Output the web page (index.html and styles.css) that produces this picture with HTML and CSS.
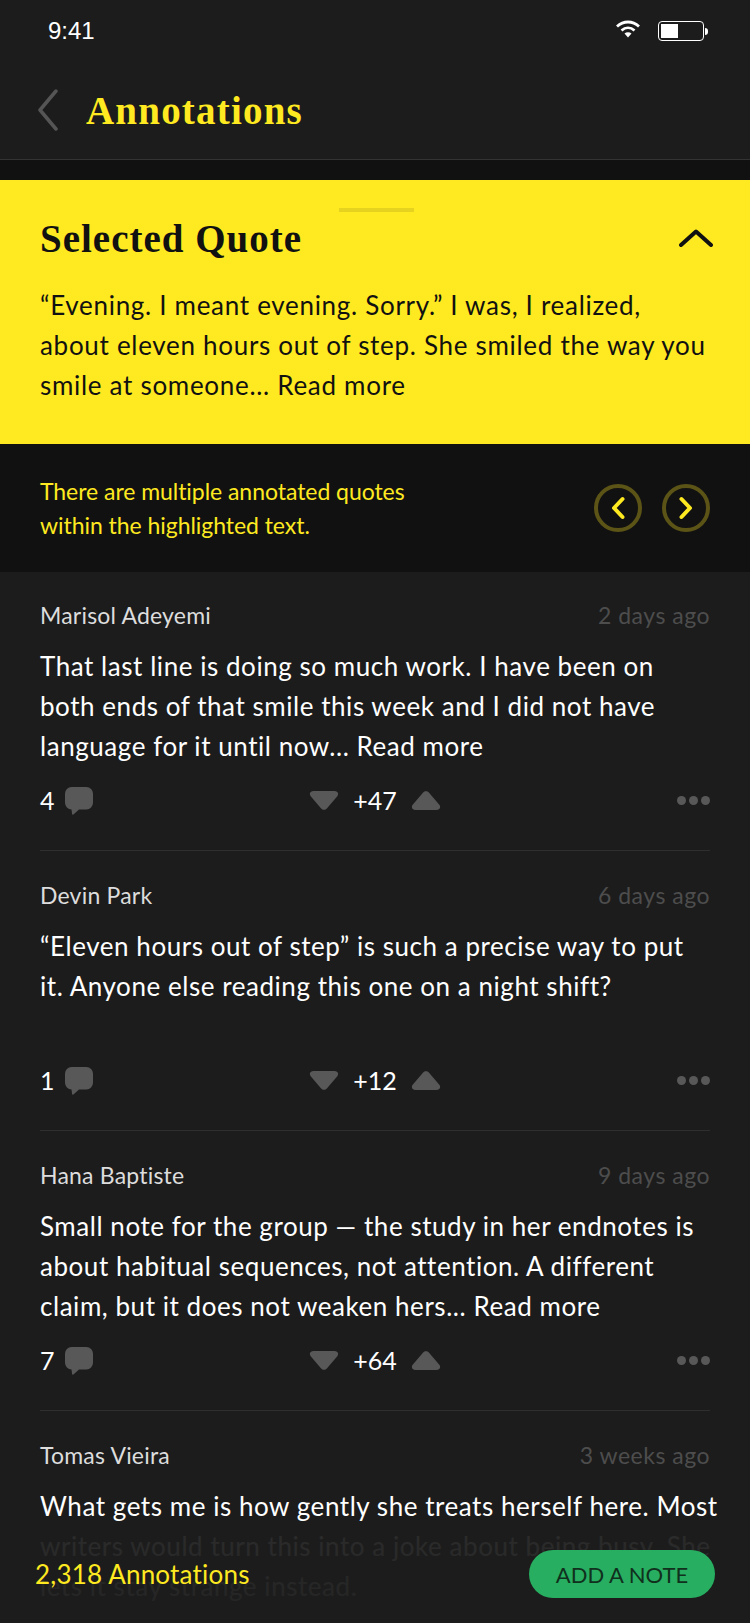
FILE: index.html
```html
<!DOCTYPE html>
<html lang="en">

<head>
    <meta charset="UTF-8">
    <meta name="viewport" content="width=device-width, initial-scale=1.0">
    <title>Annotations</title>
    <link rel="stylesheet" href="styles.css">
</head>

<body>
    <div class="app">
        <div class="top">
            <div class="status-bar">
                <span class="clock">9:41</span>
                <div class="status-icons">
                    <svg class="wifi" width="26" height="20" viewBox="0 0 26 20">
                        <path d="M2 7.5C8.500 1.500 17.500 1.500 24 7.500" fill="none" stroke="#fff" stroke-width="2.800"/>
                        <path d="M6.500 11.500C10.500 8 15.500 8 19.500 11.500" fill="none" stroke="#fff" stroke-width="2.800"/>
                        <path d="M9.500 14.500C11.500 12.800 14.500 12.800 16.500 14.500L13 18.500Z" fill="#fff"/>
                    </svg>
                    <div class="battery">
                        <div class="battery-level"></div>
                    </div>
                    <div class="battery-cap"></div>
                </div>
            </div>
            <div class="nav">
                <svg class="back" width="22" height="42" viewBox="0 0 22 42">
                    <path d="M19 2L3 21L19 40" fill="none" stroke="#555" stroke-width="3.500" stroke-linecap="round" stroke-linejoin="round"/>
                </svg>
                <h1>Annotations</h1>
            </div>
        </div>

        <div class="strip"></div>

        <div class="quote">
            <div class="handle"></div>
            <div class="quote-head">
                <h2>Selected Quote</h2>
                <svg width="34" height="18" viewBox="0 0 34 18">
                    <path d="M2 16L17 2.500L32 16" fill="none" stroke="#111" stroke-width="4" stroke-linecap="round" stroke-linejoin="round"/>
                </svg>
            </div>
            <p>“Evening. I meant evening. Sorry.” I was, I realized,<br>about eleven hours out of step. She smiled the way you<br>smile at someone... Read more</p>
        </div>

        <div class="notice">
            <p>There are multiple annotated quotes<br>within the highlighted text.</p>
            <div class="pager">
                <button class="pager-btn">
                    <svg width="14" height="24" viewBox="0 0 14 24">
                        <path d="M11.500 3L3 12L11.500 21" fill="none" stroke="#ffe920" stroke-width="4" stroke-linecap="round" stroke-linejoin="round"/>
                    </svg>
                </button>
                <button class="pager-btn">
                    <svg width="14" height="24" viewBox="0 0 14 24">
                        <path d="M2.500 3L11 12L2.500 21" fill="none" stroke="#ffe920" stroke-width="4" stroke-linecap="round" stroke-linejoin="round"/>
                    </svg>
                </button>
            </div>
        </div>

        <div class="comments">
            <div class="comment">
                <div class="comment-head">
                    <span class="author">Marisol Adeyemi</span>
                    <span class="when">2 days ago</span>
                </div>
                <p class="comment-body">That last line is doing so much work. I have been on<br>both ends of that smile this week and I did not have<br>language for it until now... Read more</p>
                <div class="actions">
                    <div class="replies">
                        <span>4</span>
                        <svg class="bubble" width="28" height="28" viewBox="0 0 30 30"><path d="M7 0H23A7 7 0 0 1 30 7V17A7 7 0 0 1 23 24H15L9 29.500C8 30 7.500 29.500 7.500 28.500L7 24A7 7 0 0 1 0 17V7A7 7 0 0 1 7 0Z" fill="#585858"/></svg>
                    </div>
                    <div class="votes">
                        <svg width="30" height="19" viewBox="0 0 30 20"><path d="M4 0H26C29.500 0 31 3 29 5.500L18 18.500C16.500 20.300 13.500 20.300 12 18.500L1 5.500C-1 3 .5 0 4 0Z" fill="#585858"/></svg>
                        <span class="score">+47</span>
                        <svg width="30" height="19" viewBox="0 0 30 20"><path d="M4 20H26C29.500 20 31 17 29 14.500L18 1.500C16.500 -.3 13.500 -.3 12 1.500L1 14.500C-1 17 .5 20 4 20Z" fill="#585858"/></svg>
                    </div>
                    <div class="more"><i></i><i></i><i></i></div>
                </div>
            </div>

            <div class="comment">
                <div class="comment-head">
                    <span class="author">Devin Park</span>
                    <span class="when">6 days ago</span>
                </div>
                <p class="comment-body">“Eleven hours out of step” is such a precise way to put<br>it. Anyone else reading this one on a night shift?</p>
                <div class="actions">
                    <div class="replies">
                        <span>1</span>
                        <svg class="bubble" width="28" height="28" viewBox="0 0 30 30"><path d="M7 0H23A7 7 0 0 1 30 7V17A7 7 0 0 1 23 24H15L9 29.500C8 30 7.500 29.500 7.500 28.500L7 24A7 7 0 0 1 0 17V7A7 7 0 0 1 7 0Z" fill="#585858"/></svg>
                    </div>
                    <div class="votes">
                        <svg width="30" height="19" viewBox="0 0 30 20"><path d="M4 0H26C29.500 0 31 3 29 5.500L18 18.500C16.500 20.300 13.500 20.300 12 18.500L1 5.500C-1 3 .5 0 4 0Z" fill="#585858"/></svg>
                        <span class="score">+12</span>
                        <svg width="30" height="19" viewBox="0 0 30 20"><path d="M4 20H26C29.500 20 31 17 29 14.500L18 1.500C16.500 -.3 13.500 -.3 12 1.500L1 14.500C-1 17 .5 20 4 20Z" fill="#585858"/></svg>
                    </div>
                    <div class="more"><i></i><i></i><i></i></div>
                </div>
            </div>

            <div class="comment">
                <div class="comment-head">
                    <span class="author">Hana Baptiste</span>
                    <span class="when">9 days ago</span>
                </div>
                <p class="comment-body">Small note for the group — the study in her endnotes is<br>about habitual sequences, not attention. A different<br>claim, but it does not weaken hers... Read more</p>
                <div class="actions">
                    <div class="replies">
                        <span>7</span>
                        <svg class="bubble" width="28" height="28" viewBox="0 0 30 30"><path d="M7 0H23A7 7 0 0 1 30 7V17A7 7 0 0 1 23 24H15L9 29.500C8 30 7.500 29.500 7.500 28.500L7 24A7 7 0 0 1 0 17V7A7 7 0 0 1 7 0Z" fill="#585858"/></svg>
                    </div>
                    <div class="votes">
                        <svg width="30" height="19" viewBox="0 0 30 20"><path d="M4 0H26C29.500 0 31 3 29 5.500L18 18.500C16.500 20.300 13.500 20.300 12 18.500L1 5.500C-1 3 .5 0 4 0Z" fill="#585858"/></svg>
                        <span class="score">+64</span>
                        <svg width="30" height="19" viewBox="0 0 30 20"><path d="M4 20H26C29.500 20 31 17 29 14.500L18 1.500C16.500 -.3 13.500 -.3 12 1.500L1 14.500C-1 17 .5 20 4 20Z" fill="#585858"/></svg>
                    </div>
                    <div class="more"><i></i><i></i><i></i></div>
                </div>
            </div>

            <div class="comment">
                <div class="comment-head">
                    <span class="author">Tomas Vieira</span>
                    <span class="when">3 weeks ago</span>
                </div>
                <p class="comment-body">What gets me is how gently she treats herself here. Most<br>writers would turn this into a joke about being busy. She<br>lets it stay strange instead.</p>
            </div>
        </div>

        <div class="footer">
            <span class="total">2,318 Annotations</span>
            <button class="add-note">ADD A NOTE</button>
        </div>
    </div>
</body>

</html>
```

FILE: styles.css
```css
* {
    box-sizing: border-box;
}

body {
    margin: 0;
    background-color: #1c1c1c;
    font-family: "Lato", sans-serif;
    color: #fff;
}

p,
h1,
h2 {
    margin: 0;
}

.app {
    width: 750px;
    height: 1623px;
    position: relative;
    overflow: hidden;
    background-color: #1c1c1c;
}

/* Status bar and title */
.top {
    height: 160px;
    border-bottom: 1px solid #333;
}

.status-bar {
    height: 62px;
    padding: 0 42px 0 48px;
    display: flex;
    align-items: center;
    justify-content: space-between;
}

.clock {
    font-family: "Liberation Sans", sans-serif;
    font-size: 24px;
}

.status-icons {
    display: flex;
    align-items: center;
}

.wifi {
    margin-right: 17px;
    margin-top: -4px;
}

.battery {
    width: 46px;
    height: 20px;
    border: 1px solid #fff;
    border-radius: 4px;
    padding: 2px;
}

.battery-level {
    width: 17px;
    height: 100%;
    background-color: #fff;
}

.battery-cap {
    width: 3px;
    height: 7px;
    margin-left: 1px;
    background-color: #fff;
    border-radius: 0 3px 3px 0;
}

.nav {
    height: 97px;
    padding: 0 0 2px 37px;
    display: flex;
    align-items: center;
    gap: 27px;
}

.nav h1 {
    padding-top: 2px;
    font-family: "Liberation Serif", serif;
    font-size: 39px;
    font-weight: bold;
    color: #ffe920;
    letter-spacing: 1.2px;
}

.strip {
    height: 20px;
    background-color: #111;
}

/* Selected quote */
.quote {
    height: 264px;
    padding: 28px 37px 0 40px;
    background-color: #ffe920;
    color: #111;
}

.handle {
    width: 75px;
    height: 4px;
    margin: 0 auto;
    background-color: #e6d320;
}

.quote-head {
    margin-top: 4px;
    height: 44px;
    display: flex;
    align-items: center;
    justify-content: space-between;
}

.quote-head h2 {
    font-family: "Liberation Serif", serif;
    font-size: 39px;
    font-weight: bold;
    letter-spacing: 1px;
}

.quote p {
    margin-top: 25px;
    font-size: 26px;
    line-height: 40px;
    letter-spacing: 0.7px;
    white-space: nowrap;
}

/* Multiple quotes notice */
.notice {
    height: 128px;
    padding: 0 40px;
    background-color: #111;
    display: flex;
    align-items: center;
    justify-content: space-between;
    color: #ffe920;
}

.notice p {
    font-size: 23px;
    line-height: 34px;
    letter-spacing: -0.05px;
}

.pager {
    display: flex;
    gap: 20px;
}

.pager-btn {
    width: 48px;
    height: 48px;
    padding: 0;
    background: none;
    border: 4px solid #5c5416;
    border-radius: 50%;
    display: flex;
    align-items: center;
    justify-content: center;
}

/* Comment list */
.comments {
    padding: 0 40px;
}

.comment {
    height: 279px;
    margin-bottom: 1px;
    padding-top: 27px;
    border-bottom: 1px solid #2e2e2e;
}

.comment-head {
    height: 32px;
    display: flex;
    align-items: center;
    justify-content: space-between;
}

.author {
    font-size: 23px;
    letter-spacing: 0.2px;
    color: #ddd;
}

.when {
    font-size: 23px;
    letter-spacing: 0.5px;
    color: #4d4d4d;
}

.comment-body {
    margin-top: 15px;
    height: 120px;
    font-size: 26px;
    line-height: 40px;
    letter-spacing: 0.55px;
    white-space: nowrap;
}

.actions {
    margin-top: 16px;
    height: 36px;
    display: grid;
    grid-template-columns: 1fr auto 1fr;
    align-items: center;
    font-size: 25px;
}

.replies {
    display: flex;
    align-items: center;
    gap: 10px;
}

.bubble {
    margin-top: 2px;
}

.votes {
    display: flex;
    align-items: center;
    gap: 14px;
}

.score {
    width: 44px;
    text-align: center;
}

.more {
    display: flex;
    justify-content: flex-end;
    gap: 3px;
}

.more i {
    width: 9px;
    height: 9px;
    background-color: #585858;
    border-radius: 50%;
}

/* Fixed footer over the list */
.footer {
    position: absolute;
    left: 0;
    right: 0;
    bottom: 0;
    height: 98px;
    padding: 0 35px;
    display: flex;
    align-items: center;
    justify-content: space-between;
    background: linear-gradient(rgba(28, 28, 28, 0.93), rgba(28, 28, 28, 0.97));
}

.total {
    font-size: 26px;
    letter-spacing: 0.2px;
    color: #ffe920;
}

.add-note {
    width: 186px;
    height: 48px;
    background-color: #27ae60;
    border: none;
    border-radius: 24px;
    font-family: "Lato", sans-serif;
    font-size: 22px;
    color: #10301d;
}
```
